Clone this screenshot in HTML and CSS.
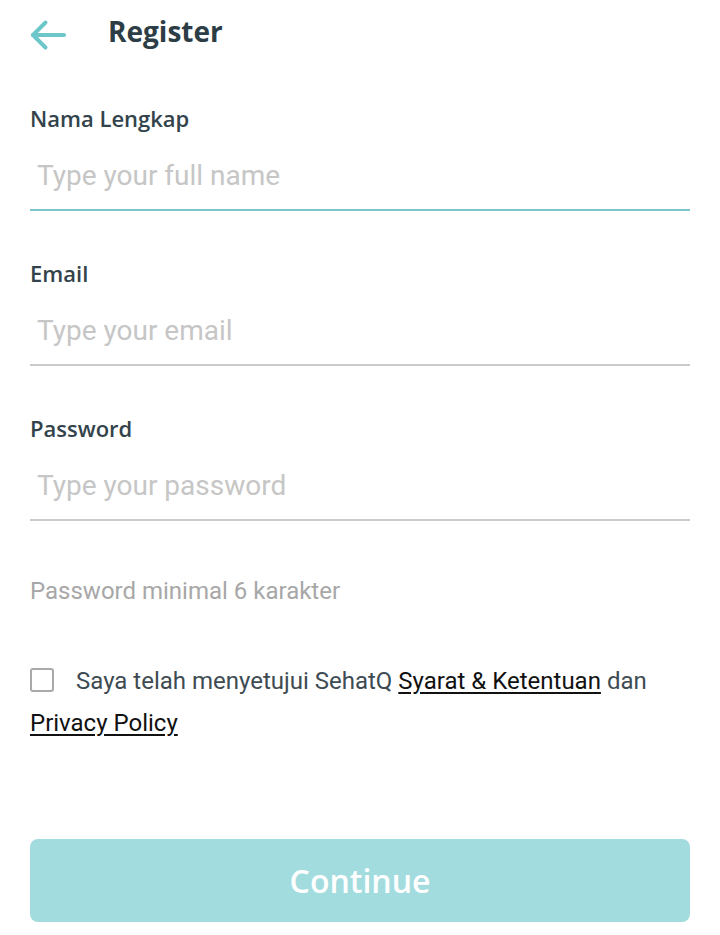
FILE: index.html
```html
<!DOCTYPE html>
<html lang="id">
<head>
<meta charset="utf-8">
<title>Register</title>
<link rel="stylesheet" href="styles.css">
</head>
<body>
<div class="page">
  <header class="topbar">
    <button class="back" aria-label="Back">
      <svg width="40" height="40" viewBox="0 0 40 40" fill="none" stroke="#6cc6ca" stroke-width="4" stroke-linecap="round" stroke-linejoin="round">
        <path d="M35 20H4"/>
        <path d="M16.5 7.5L4 20L16.5 32.5"/>
      </svg>
    </button>
    <h1 class="title">Register</h1>
  </header>

  <form class="form">
    <div class="field">
      <label class="label">Nama Lengkap</label>
      <input class="input active" type="text" placeholder="Type your full name">
    </div>
    <div class="field">
      <label class="label">Email</label>
      <input class="input" type="email" placeholder="Type your email">
    </div>
    <div class="field">
      <label class="label">Password</label>
      <input class="input" type="password" placeholder="Type your password">
    </div>
    <p class="hint">Password minimal 6 karakter</p>

    <p class="agree"><span class="box"></span>Saya telah menyetujui SehatQ <a href="#">Syarat &amp; Ketentuan</a> dan <a href="#">Privacy Policy</a></p>

    <button class="submit" type="button">Continue</button>
  </form>
</div>
</body>
</html>
```

FILE: styles.css
```css
* { box-sizing: border-box; }
html, body { margin: 0; padding: 0; background: #fff; }
body { font-family: "Open Sans", "Noto Sans", sans-serif; color: #2f3e46; }
.page { padding: 0 30px; }

.topbar { display: flex; align-items: flex-start; height: 70px; }
.back { background: none; border: 0; padding: 0; margin: 15px 0 0 -1px; width: 79px; height: 40px; display: flex; align-items: center; cursor: pointer; }
.back svg { display: block; }
.title { margin: 12px 0 0; font-size: 28px; font-weight: 700; color: #2d3d46; line-height: 38px; }

.form { display: flex; flex-direction: column; padding-top: 33px; }
.field { display: flex; flex-direction: column; margin-bottom: 47px; }
.label { font-size: 22px; font-weight: 600; color: #33434b; line-height: 30px; }
.input { border: 0; border-bottom: 2px solid #cbcbcb; outline: none; padding: 24px 0 16px 7px; font-family: Roboto, sans-serif; font-size: 28px; line-height: 36px; height: 78px; color: #333; background: transparent; width: 100%; }
.input.active { border-bottom-color: #7cc6c9; }
.input::placeholder { color: #c6c6c6; opacity: 1; }

.hint { margin: 8px 0 0; font-family: Roboto, sans-serif; font-size: 24px; line-height: 30px; color: #a7a7a7; }

.agree { margin: 54px 0 0; font-family: Roboto, sans-serif; font-size: 24px; line-height: 42px; color: #3e4b53; }
.agree a { color: #111; text-decoration: underline; text-underline-offset: 3px; }
.box { display: inline-block; width: 24px; height: 24px; border: 2px solid #a9a9a9; border-radius: 3px; vertical-align: -3px; margin-right: 22px; }

.submit { margin-top: 95px; height: 83px; border: 0; border-radius: 8px; background: #a3dcdf; color: #fff; font-family: "Open Sans", sans-serif; font-weight: 600; font-size: 32px; width: 100%; padding: 0; }
```
